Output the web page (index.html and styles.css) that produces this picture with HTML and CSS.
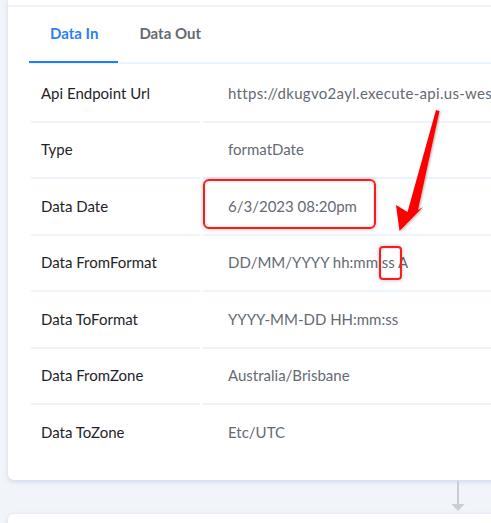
FILE: index.html
```html
<!DOCTYPE html>
<html>
<head>
<meta charset="utf-8">
<link rel="stylesheet" href="styles.css">
</head>
<body>
<div class="page">
  <div class="card">
    <div class="card-top"></div>
    <div class="tabs">
      <div class="tab active">Data In</div>
      <div class="tab">Data Out</div>
    </div>
    <div class="table">
      <div class="row"><div class="label">Api Endpoint Url</div><div class="value url">https://dkugvo2ayl.execute-api.us-west-2.amazonaws.com/prod</div></div>
      <div class="row"><div class="label">Type</div><div class="value">formatDate</div></div>
      <div class="row"><div class="label">Data Date</div><div class="value">6/3/2023 08:20pm</div></div>
      <div class="row"><div class="label">Data FromFormat</div><div class="value">DD/MM/YYYY hh:mm:ss A</div></div>
      <div class="row"><div class="label">Data ToFormat</div><div class="value">YYYY-MM-DD HH:mm:ss</div></div>
      <div class="row"><div class="label">Data FromZone</div><div class="value">Australia/Brisbane</div></div>
      <div class="row last"><div class="label">Data ToZone</div><div class="value">Etc/UTC</div></div>
    </div>
  </div>
  <div class="connector">
    <svg width="14" height="33" viewBox="0 0 14 33"><line x1="7" y1="0" x2="7" y2="25" stroke="#c9cdd4" stroke-width="2"/><polygon points="0.5,23 13.5,23 7,30" fill="#c9cdd4"/></svg>
  </div>
  <div class="card card2"></div>

  <div class="mark mark-date"></div>
  <div class="mark mark-ss"></div>
  <svg class="arrow" width="491" height="523" viewBox="0 0 491 523">
    <defs>
      <filter id="sh" x="-20%" y="-20%" width="140%" height="140%">
        <feDropShadow dx="1" dy="1" stdDeviation="1.2" flood-color="#000" flood-opacity="0.3"/>
      </filter>
    </defs>
    <polygon filter="url(#sh)" fill="#ff0000" points="436,110 439.5,111 418,210 423,207 399.5,231 396,205 407.5,212"/>
  </svg>
</div>
</body>
</html>
```
FILE: styles.css
```css
html, body {
  margin: 0;
  padding: 0;
}
body {
  width: 491px;
  height: 523px;
  overflow: hidden;
  background: #f1f4f9;
  font-family: Lato, "Open Sans", sans-serif;
}
.page {
  position: relative;
  width: 491px;
  height: 523px;
  padding-left: 8px;
  box-sizing: border-box;
}
.card {
  width: 640px;
  background: #fff;
  border-radius: 0 0 6px 6px;
  box-shadow: 0 1px 4px rgba(120, 140, 180, 0.25);
  border-bottom: 1px solid #d5e2f5;
  padding: 0 0 18px 21px;
  box-sizing: border-box;
}
.card-top {
  height: 5px;
  margin-left: -21px;
  border-bottom: 2px solid #eef4fd;
}
.tabs {
  display: flex;
  height: 55px;
  border-bottom: 2px solid #ebf3fd;
}
.tab {
  position: relative;
  padding: 0 20px 4px 21px;
  display: flex;
  align-items: center;
  font-size: 15px;
  font-weight: 700;
  color: #646a73;
}
.tab.active {
  color: #2b7ff6;
}
.tab.active::after {
  content: "";
  position: absolute;
  left: 0;
  right: 0;
  bottom: -1px;
  height: 2px;
  background: #1f7bff;
}
.table {
  margin-left: 2px;
  padding-top: 2px;
}
.row {
  display: grid;
  grid-template-columns: 169px 1fr;
  column-gap: 3px;
  height: 56.5px;
}
.label, .value {
  display: flex;
  align-items: center;
  font-size: 15px;
  white-space: nowrap;
  border-bottom: 2px solid #edf4fd;
  padding-bottom: 1px;
}
.row.last .label, .row.last .value {
  border-bottom-color: transparent;
}
.label {
  padding-left: 10px;
  color: #1f2329;
}
.value {
  padding-left: 25px;
  color: #646a73;
}
.value.url {
  letter-spacing: 0.3px;
}
.connector {
  height: 33px;
  padding-left: 443px;
}
.connector svg {
  display: block;
}
.card2 {
  height: 40px;
  border-radius: 6px 6px 0 0;
  border-bottom: none;
  padding: 0;
}
.mark {
  position: absolute;
  border: 2px solid #ff1a1a;
  box-sizing: border-box;
  box-shadow: 0 0 4px rgba(0, 0, 0, 0.25), inset 0 0 3px rgba(0, 0, 0, 0.15);
}
.mark-date {
  left: 203px;
  top: 179px;
  width: 173px;
  height: 50px;
  border-radius: 6px;
}
.mark-ss {
  left: 379px;
  top: 246px;
  width: 23px;
  height: 34px;
  border-radius: 4px;
}
.arrow {
  position: absolute;
  left: 0;
  top: 0;
  pointer-events: none;
}
```
